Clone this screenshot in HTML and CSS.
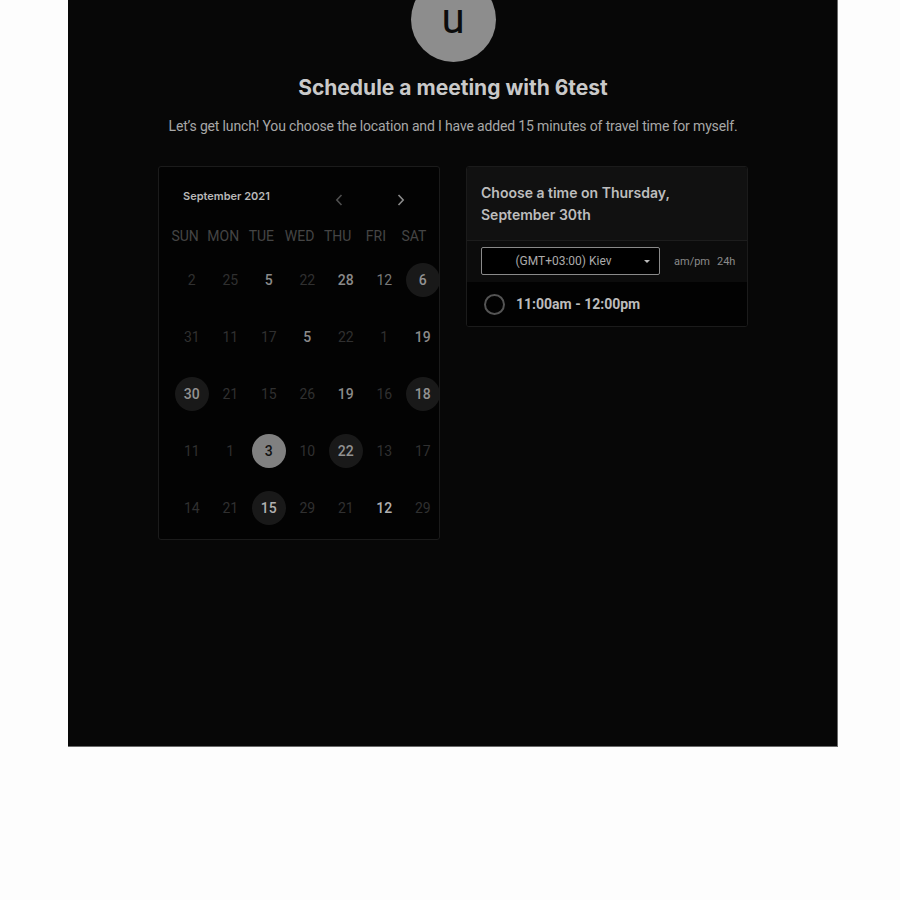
FILE: index.html
```html
<!DOCTYPE html>
<html>
<head>
<meta charset="utf-8">
<link rel="stylesheet" href="styles.css">
</head>
<body>
<div class="panel">
  <div class="avatar">u</div>
  <h1 class="title">Schedule a meeting with 6test</h1>
  <p class="subtitle">Let’s get lunch! You choose the location and I have added 15 minutes of travel time for myself.</p>
  <div class="cards">
    <div class="card cal">
      <div class="cal-head">
        <span class="month">September 2021</span>
        <div class="nav">
          <span class="navbtn prev"><svg width="8" height="12" viewBox="0 0 8 12"><path d="M6.5 1 L1.8 6 L6.5 11" fill="none" stroke="currentColor" stroke-width="1.6"/></svg></span>
          <span class="navbtn next"><svg width="8" height="12" viewBox="0 0 8 12"><path d="M1.5 1 L6.2 6 L1.5 11" fill="none" stroke="currentColor" stroke-width="1.6"/></svg></span>
        </div>
      </div>
      <div class="weekdays">
        <span>SUN</span><span>MON</span><span>TUE</span><span>WED</span><span>THU</span><span>FRI</span><span>SAT</span>
      </div>
      <div class="days">
        <span class="d dim">2</span><span class="d dim">25</span><span class="d on">5</span><span class="d dim">22</span><span class="d on">28</span><span class="d mid">12</span><span class="d circ">6</span>
        <span class="d dim">31</span><span class="d dim">11</span><span class="d dim">17</span><span class="d on">5</span><span class="d dim">22</span><span class="d dim">1</span><span class="d on">19</span>
        <span class="d circ">30</span><span class="d dim">21</span><span class="d dim">15</span><span class="d dim">26</span><span class="d on">19</span><span class="d dim">16</span><span class="d circ">18</span>
        <span class="d dim">11</span><span class="d dim">1</span><span class="d sel">3</span><span class="d dim">10</span><span class="d circ">22</span><span class="d dim">13</span><span class="d dim">17</span>
        <span class="d dim">14</span><span class="d dim">21</span><span class="d circ bright">15</span><span class="d dim">29</span><span class="d dim">21</span><span class="d on bright">12</span><span class="d dim">29</span>
      </div>
    </div>
    <div class="card times">
      <div class="times-head">Choose a time on Thursday,<br>September 30th</div>
      <div class="tz-row">
        <div class="select"><span>(GMT+03:00) Kiev</span><span class="caret"></span></div>
        <div class="fmt"><span>am/pm</span><span>24h</span></div>
      </div>
      <div class="slot">
        <span class="radio"></span>
        <span class="slot-text">11:00am - 12:00pm</span>
      </div>
    </div>
  </div>
</div>
</body>
</html>
```

FILE: styles.css
```css
html, body {
  margin: 0;
  padding: 0;
  background: #fdfdfd;
}
body {
  font-family: Roboto, "Liberation Sans", sans-serif;
}
.panel {
  box-sizing: border-box;
  margin-left: 68px;
  width: 770px;
  height: 747px;
  background: #070707;
  border-right: 1px solid #6a6a6a;
  border-bottom: 1px solid #6a6a6a;
  display: flex;
  flex-direction: column;
  align-items: center;
  overflow: hidden;
  padding-left: 1px;
}
.avatar {
  width: 85px;
  height: 85px;
  border-radius: 50%;
  background: #8d8d8d;
  margin-top: -23px;
  display: flex;
  align-items: center;
  justify-content: center;
  color: #0c0c0c;
  font-family: Roboto, sans-serif;
  font-size: 42px;
  line-height: 1;
  padding-bottom: 2px;
  box-sizing: border-box;
}
.title {
  margin: 14px 0 0;
  font-family: Inter, sans-serif;
  font-weight: 700;
  font-size: 21px;
  line-height: 24px;
  color: #c9c9c9;
}
.subtitle {
  margin: 16px 0 0;
  font-size: 14px;
  line-height: 20px;
  color: #a8a8a8;
  letter-spacing: -0.15px;
}
.cards {
  margin-top: 30px;
  display: flex;
  align-items: flex-start;
  gap: 26px;
}
.card {
  box-sizing: border-box;
  width: 282px;
  border: 1px solid #1b1b1b;
  border-radius: 3px;
  overflow: hidden;
}
.cal {
  height: 374px;
  background: #030303;
}
.cal-head {
  display: flex;
  align-items: center;
  padding: 21px 26px 0 24px;
  height: 16px;
  box-sizing: content-box;
}
.month {
  font-family: Inter, sans-serif;
  font-weight: 600;
  font-size: 11px;
  line-height: 16px;
  color: #b8b8b8;
}
.nav {
  margin-left: auto;
  display: flex;
  gap: 38px;
  padding-top: 7px;
}
.navbtn {
  width: 24px;
  display: flex;
  justify-content: center;
}
.prev { color: #4e4e4e; }
.next { color: #8a8a8a; }
.weekdays {
  display: grid;
  grid-template-columns: repeat(7, 38.17px);
  margin: 22px 0 0 7px;
  font-size: 14px;
  line-height: 20px;
  color: #454545;
  text-align: center;
}
.days {
  display: grid;
  grid-template-columns: repeat(7, 38.5px);
  grid-auto-rows: 57px;
  margin: 5px 0 0 13.5px;
}
.d {
  display: flex;
  align-items: center;
  justify-content: center;
  font-size: 14px;
  position: relative;
}
.dim { color: #303030; }
.mid { color: #787878; }
.on { color: #8a8a8a; font-weight: 500; }
.bright { color: #b0b0b0 !important; }
.circ, .sel {
  width: 34px;
  height: 34px;
  border-radius: 50%;
  justify-self: center;
  align-self: center;
  font-weight: 500;
}
.circ { background: #191919; color: #929292; }
.sel { background: #808080; color: #111; }
.times {
  background: #020202;
}
.times-head {
  background: #111111;
  padding: 15px 14px 14px;
  font-family: Inter, sans-serif;
  font-weight: 600;
  font-size: 14px;
  line-height: 22px;
  color: #bdbdbd;
  border-bottom: 1px solid #1d1d1d;
}
.tz-row {
  background: #0c0c0c;
  display: flex;
  align-items: center;
  padding: 6px 14px 7px;
}
.select {
  box-sizing: border-box;
  flex-shrink: 0;
  width: 179px;
  height: 28px;
  border: 1px solid #8a8a8a;
  border-radius: 2px;
  background: #000;
  display: flex;
  align-items: center;
  justify-content: center;
  padding-right: 14px;
  position: relative;
  font-size: 12px;
  color: #ababab;
}
.caret {
  position: absolute;
  right: 9px;
  top: 12px;
  width: 0;
  height: 0;
  border-left: 3px solid transparent;
  border-right: 3px solid transparent;
  border-top: 3px solid #bbb;
}
.fmt {
  margin-left: 14px;
  display: flex;
  gap: 7px;
  font-size: 11px;
  color: #8a8a8a;
  white-space: nowrap;
}
.slot {
  height: 44px;
  display: flex;
  align-items: center;
  padding-left: 17px;
  background: #020202;
}
.radio {
  box-sizing: border-box;
  width: 21px;
  height: 21px;
  border: 2px solid #545454;
  border-radius: 50%;
}
.slot-text {
  margin-left: 11px;
  font-size: 14px;
  font-weight: 700;
  color: #bcbcbc;
}
```
